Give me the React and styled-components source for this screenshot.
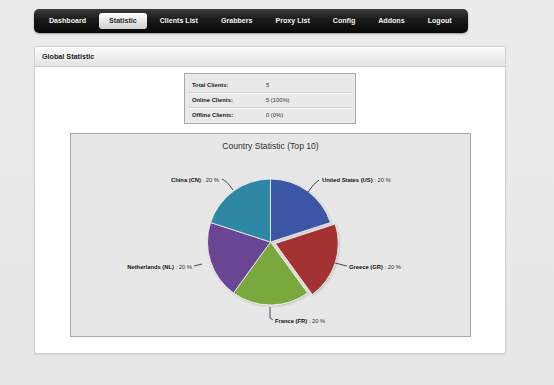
import React from 'react'
import styled, { createGlobalStyle } from 'styled-components'

const GlobalStyle = createGlobalStyle`
  html, body {
    margin: 0;
    padding: 0;
  }
  body {
    width: 554px;
    height: 385px;
    overflow: hidden;
    background: linear-gradient(to bottom, #ececec 0%, #e6e6e6 100%);
    font-family: "Liberation Sans", Arial, sans-serif;
  }
`

const Page = styled.div`
  padding: 9px 0 0 34px;
`

const NavBar = styled.ul`
  list-style: none;
  margin: 0;
  width: 434px;
  height: 24px;
  box-sizing: border-box;
  padding: 0 0 0 5px;
  display: flex;
  align-items: center;
  gap: 3px;
  border-radius: 5px;
  background: linear-gradient(to bottom, #3c3c3c 0%, #1a1a1a 45%, #080808 100%);
  box-shadow: 0 1px 2px rgba(0, 0, 0, 0.35);
`

const NavItem = styled.li`
  height: 16px;
  line-height: 16px;
  padding: 0 10px;
  border-radius: 3px;
  font-size: 7.1px;
  font-weight: bold;
  color: ${props => props.active ? '#2a2a2a' : '#f4f4f4'};
  background: ${props => props.active ? 'linear-gradient(to bottom, #ffffff 0%, #e6e6e6 55%, #cfcfcf 100%)' : 'transparent'};
  white-space: nowrap;
`

const Panel = styled.div`
  margin-top: 13px;
  width: 472px;
  height: 308px;
  box-sizing: border-box;
  background: #fff;
  border: 1px solid #d0d0d0;
  border-radius: 2px;
  box-shadow: 0 1px 2px rgba(0, 0, 0, 0.08);
  display: flex;
  flex-direction: column;
  align-items: center;
`

const PanelHeader = styled.div`
  align-self: stretch;
  height: 19px;
  line-height: 19px;
  padding-left: 7px;
  font-size: 7.2px;
  font-weight: bold;
  color: #1e1e1e;
  background: linear-gradient(to bottom, #fbfbfb 0%, #eeeeee 60%, #e2e2e2 100%);
  border-bottom: 1px solid #cfcfcf;
`

const StatsBox = styled.div`
  margin-top: 6px;
  width: 172px;
  height: 51px;
  box-sizing: border-box;
  padding: 4px 3px 0 3px;
  background: #e9e9e9;
  border: 1px solid #a9a9a9;
  box-shadow: inset 0 0 1px #fff;
`

const StatRow = styled.div`
  display: flex;
  align-items: center;
  height: 14px;
  padding-left: 4px;
  font-size: 5.8px;
  color: #222;
  border-bottom: ${props => props.last ? 'none' : '1px solid #d4d4d4'};
  box-shadow: ${props => props.last ? 'none' : '0 1px 0 #f7f7f7'};
`

const StatLabel = styled.span`
  width: 74px;
  font-weight: bold;
`

const StatValue = styled.span`
  color: #333;
`

const ChartBox = styled.div`
  margin-top: 9px;
  width: 401px;
  height: 204px;
  box-sizing: border-box;
  background: #e7e7e7;
  border: 1px solid #a8a8a8;
`

const ChartSvg = styled.svg`
  display: block;
`

const navItems = ['Dashboard', 'Statistic', 'Clients List', 'Grabbers', 'Proxy List', 'Config', 'Addons', 'Logout']

const slices = [
  { name: 'United States (US)', color: '#3b56a4' },
  { name: 'Greece (GR)', color: '#a53131', explode: 5 },
  { name: 'France (FR)', color: '#79a83d' },
  { name: 'Netherlands (NL)', color: '#6b4494' },
  { name: 'China (CN)', color: '#2f87a4' }
]

const labels = [
  { name: 'China (CN)', x: 148, y: 48, anchor: 'end', line: 'M151,45 Q156,47 162,56' },
  { name: 'United States (US)', x: 251, y: 48, anchor: 'start', line: 'M248,46 Q243,49 237,58' },
  { name: 'Netherlands (NL)', x: 121, y: 135, anchor: 'end', line: 'M123,132 L131,130' },
  { name: 'Greece (GR)', x: 278, y: 135, anchor: 'start', line: 'M264,129 L276,132' },
  { name: 'France (FR)', x: 204, y: 189, anchor: 'start', line: 'M199,173 L199,184 L202,186' }
]

const CX = 199.5
const CY = 108
const R = 63

const rad = d => d * Math.PI / 180

const slicePath = (a0, a1, dx, dy) => {
  const x0 = CX + dx + R * Math.cos(rad(a0))
  const y0 = CY + dy + R * Math.sin(rad(a0))
  const x1 = CX + dx + R * Math.cos(rad(a1))
  const y1 = CY + dy + R * Math.sin(rad(a1))
  return `M${CX + dx},${CY + dy} L${x0},${y0} A${R},${R} 0 0 1 ${x1},${y1} Z`
}

const PieChart = () => (
  <ChartSvg width='399' height='202' viewBox='0 0 399 202'>
    <defs>
      <filter id='shade' x='-20%' y='-20%' width='140%' height='140%'>
        <feDropShadow dx='1' dy='1' stdDeviation='1' floodColor='#000' floodOpacity='0.18' />
      </filter>
    </defs>
    <text x='199.5' y='15' textAnchor='middle' fontSize='8.6' fill='#333' fontFamily='"Liberation Sans", Arial, sans-serif'>
      Country Statistic (Top 10)
    </text>
    <g filter='url(#shade)'>
      {slices.map((s, i) => {
        const a0 = -90 + 72 * i
        const a1 = a0 + 72
        const mid = rad(a0 + 36)
        const off = s.explode || 0
        return (
          <path
            key={s.name}
            d={slicePath(a0, a1, off * Math.cos(mid), off * Math.sin(mid))}
            fill={s.color}
            stroke='#f4f4f4'
            strokeWidth='0.8'
          />
        )
      })}
    </g>
    {labels.map(l => (
      <g key={l.name}>
        <path d={l.line} fill='none' stroke='#222' strokeWidth='0.8' />
        <text x={l.x} y={l.y} textAnchor={l.anchor} fontSize='5.8' fill='#111' fontFamily='"Liberation Sans", Arial, sans-serif'>
          <tspan fontWeight='bold'>{l.name}</tspan>
          <tspan fill='#333'> : 20 %</tspan>
        </text>
      </g>
    ))}
  </ChartSvg>
)

const App = () => (
  <>
    <GlobalStyle />
    <Page>
      <NavBar>
        {navItems.map(item => (
          <NavItem key={item} active={item === 'Statistic'}>{item}</NavItem>
        ))}
      </NavBar>
      <Panel>
        <PanelHeader>Global Statistic</PanelHeader>
        <StatsBox>
          <StatRow><StatLabel>Total Clients:</StatLabel><StatValue>5</StatValue></StatRow>
          <StatRow><StatLabel>Online Clients:</StatLabel><StatValue>5 (100%)</StatValue></StatRow>
          <StatRow last><StatLabel>Offline Clients:</StatLabel><StatValue>0 (0%)</StatValue></StatRow>
        </StatsBox>
        <ChartBox>
          <PieChart />
        </ChartBox>
      </Panel>
    </Page>
  </>
)

export default App
